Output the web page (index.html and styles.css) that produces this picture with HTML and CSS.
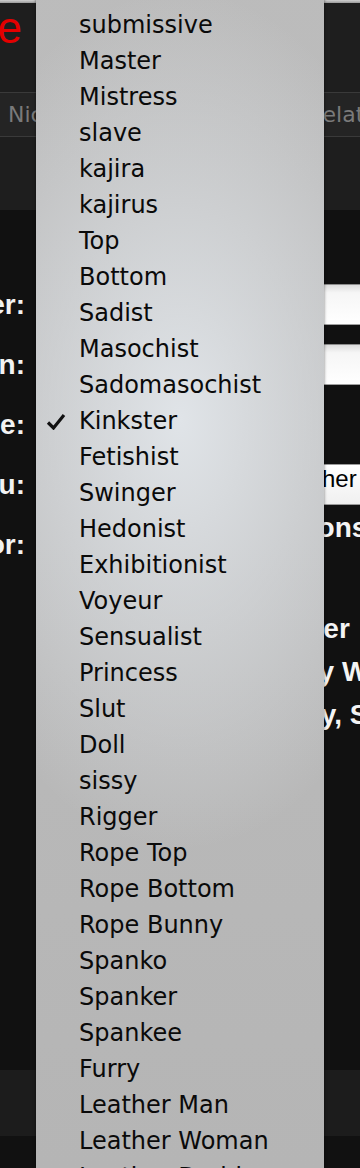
FILE: index.html
```html
<!DOCTYPE html>
<html lang="en">
<head>
<meta charset="utf-8">
<title>Edit Profile</title>
<link rel="stylesheet" href="styles.css">
</head>
<body>
<div class="chrome-strip"></div>
<header class="site-header">
  <div class="logo-wrap"><span class="logo">Kinkyplace</span></div>
  <nav class="tabs">
    <span class="tab">Nickname</span>
    <span class="tab">Profile</span>
    <span class="tab">Relationships</span>
  </nav>
</header>

<main class="page">
  <form class="profile-form">
    <div class="row">
      <label class="label">Gender:</label>
      <div class="control"><span class="input"></span></div>
    </div>
    <div class="row">
      <label class="label">Location:</label>
      <div class="control"><span class="input"></span></div>
    </div>
    <div class="row">
      <label class="label">Role:</label>
      <div class="control"><span class="select">Kinkster</span></div>
    </div>
    <div class="row">
      <label class="label">Are you:</label>
      <div class="control"><span class="select">Straight, Gay, Bisexual, Other</span></div>
    </div>
    <div class="row">
      <label class="label">Looking for:</label>
      <div class="value-block">
        <p class="value-title">Relationship Motivations:</p>
        <ul class="value-list">
          <li>Events, Mentor/Teacher</li>
          <li>Fun, Someone To Play With</li>
          <li>Friendship, Kinky Play, Submission</li>
        </ul>
      </div>
    </div>
  </form>
</main>

<footer class="site-footer"></footer>

<div class="popup-menu">
  <ul class="menu-list">
    <li class="item"><span class="mark"></span><span>Dominant</span></li>
    <li class="item"><span class="mark"></span><span>Domme</span></li>
    <li class="item"><span class="mark"></span><span>Switch</span></li>
    <li class="item"><span class="mark"></span><span>submissive</span></li>
    <li class="item"><span class="mark"></span><span>Master</span></li>
    <li class="item"><span class="mark"></span><span>Mistress</span></li>
    <li class="item"><span class="mark"></span><span>slave</span></li>
    <li class="item"><span class="mark"></span><span>kajira</span></li>
    <li class="item"><span class="mark"></span><span>kajirus</span></li>
    <li class="item"><span class="mark"></span><span>Top</span></li>
    <li class="item"><span class="mark"></span><span>Bottom</span></li>
    <li class="item"><span class="mark"></span><span>Sadist</span></li>
    <li class="item"><span class="mark"></span><span>Masochist</span></li>
    <li class="item"><span class="mark"></span><span>Sadomasochist</span></li>
    <li class="item selected"><span class="mark"><svg class="check" viewBox="0 0 20 17" width="20" height="17"><path d="M2 9.5 L7.5 15 L18 2" fill="none" stroke="#111" stroke-width="3.2" stroke-linejoin="miter"/></svg></span><span>Kinkster</span></li>
    <li class="item"><span class="mark"></span><span>Fetishist</span></li>
    <li class="item"><span class="mark"></span><span>Swinger</span></li>
    <li class="item"><span class="mark"></span><span>Hedonist</span></li>
    <li class="item"><span class="mark"></span><span>Exhibitionist</span></li>
    <li class="item"><span class="mark"></span><span>Voyeur</span></li>
    <li class="item"><span class="mark"></span><span>Sensualist</span></li>
    <li class="item"><span class="mark"></span><span>Princess</span></li>
    <li class="item"><span class="mark"></span><span>Slut</span></li>
    <li class="item"><span class="mark"></span><span>Doll</span></li>
    <li class="item"><span class="mark"></span><span>sissy</span></li>
    <li class="item"><span class="mark"></span><span>Rigger</span></li>
    <li class="item"><span class="mark"></span><span>Rope Top</span></li>
    <li class="item"><span class="mark"></span><span>Rope Bottom</span></li>
    <li class="item"><span class="mark"></span><span>Rope Bunny</span></li>
    <li class="item"><span class="mark"></span><span>Spanko</span></li>
    <li class="item"><span class="mark"></span><span>Spanker</span></li>
    <li class="item"><span class="mark"></span><span>Spankee</span></li>
    <li class="item"><span class="mark"></span><span>Furry</span></li>
    <li class="item"><span class="mark"></span><span>Leather Man</span></li>
    <li class="item"><span class="mark"></span><span>Leather Woman</span></li>
    <li class="item"><span class="mark"></span><span>Leather Daddy</span></li>
  </ul>
</div>
</body>
</html>
```

FILE: styles.css
```css
html, body {
  margin: 0;
  height: 1168px;
  overflow: hidden;
  background: #111111;
}

body {
  position: relative;
  font-family: "Liberation Sans", Arial, sans-serif;
}

.chrome-strip {
  height: 3px;
  background: linear-gradient(#d2d2d2, #9a9a9a);
}

.site-header {
  background: #1e1e1e;
  padding-bottom: 73px;
}

.logo-wrap {
  width: 22px;
  height: 50px;
  margin-bottom: 39px;
  display: flex;
  justify-content: flex-end;
}

.logo {
  flex: none;
  font-size: 44px;
  line-height: 50px;
  color: #e40000;
  white-space: nowrap;
}

.tabs {
  display: flex;
  align-items: center;
  column-gap: 61px;
  height: 43px;
  padding-left: 8px;
  background: #242424;
  border-top: 1px solid #3a3a3a;
  border-bottom: 1px solid #3a3a3a;
  font-family: "DejaVu Sans", sans-serif;
  font-size: 22px;
  color: #7a7a7a;
  white-space: nowrap;
  overflow: hidden;
}

.tab {
  flex: none;
}

.page {
  height: 860px;
  box-sizing: border-box;
  padding-top: 74px;
  overflow: hidden;
}

.profile-form {
  display: flex;
  flex-direction: column;
  gap: 19px;
}

.row {
  display: flex;
  align-items: flex-start;
}

.label {
  flex: none;
  width: 25px;
  display: flex;
  justify-content: flex-end;
  white-space: nowrap;
  font-size: 28px;
  font-weight: bold;
  line-height: 41px;
  color: #f2f2f2;
}

.control {
  flex: none;
  margin-left: 11px;
}

.input {
  display: block;
  width: 420px;
  height: 41px;
  box-sizing: border-box;
  border: 1px solid #a0a0a0;
  border-top-color: #8c8c8c;
  background: linear-gradient(#dcdcdc, #f6f6f6 20%, #ffffff);
}

.select {
  display: inline-block;
  height: 41px;
  box-sizing: border-box;
  padding: 0 40px 0 4px;
  border: 1px solid #9a9a9a;
  border-radius: 3px;
  background: linear-gradient(#ffffff, #f0f0f0);
  font-size: 24px;
  line-height: 27px;
  color: #000000;
  white-space: nowrap;
}

.value-block {
  flex: none;
  margin-left: 11px;
  margin-top: -17px;
  font-size: 28px;
  font-weight: bold;
  color: #f4f4f4;
  white-space: nowrap;
}

.value-title {
  margin: 0;
  line-height: 42px;
}

.value-list {
  list-style: none;
  margin: 58px 0 0;
  padding: 0;
  line-height: 43px;
}

.site-footer {
  height: 66px;
  background: #1c1c1c;
}

.popup-menu {
  position: absolute;
  left: 36px;
  top: -105px;
  width: 288px;
  height: 1273px;
  padding: 4px 0;
  box-sizing: border-box;
  overflow: hidden;
  background:
    radial-gradient(ellipse 260px 430px at 50% 525px, rgba(224, 228, 232, 1) 0%, rgba(224, 228, 232, 0) 100%),
    linear-gradient(#bcbcbc, #bababa 50%, #b5b5b5);
  box-shadow: 0 0 3px rgba(0, 0, 0, 0.5);
  font-family: "DejaVu Sans", sans-serif;
  font-size: 24px;
  color: #0a0a0a;
}

.menu-list {
  list-style: none;
  margin: 0;
  padding: 0;
}

.item {
  display: grid;
  grid-template-columns: 20px 1fr;
  column-gap: 13px;
  align-items: center;
  height: 36px;
  padding-left: 10px;
  line-height: 36px;
  white-space: nowrap;
}

.mark {
  display: flex;
  align-items: center;
  height: 36px;
}

.check {
  display: block;
}
```
